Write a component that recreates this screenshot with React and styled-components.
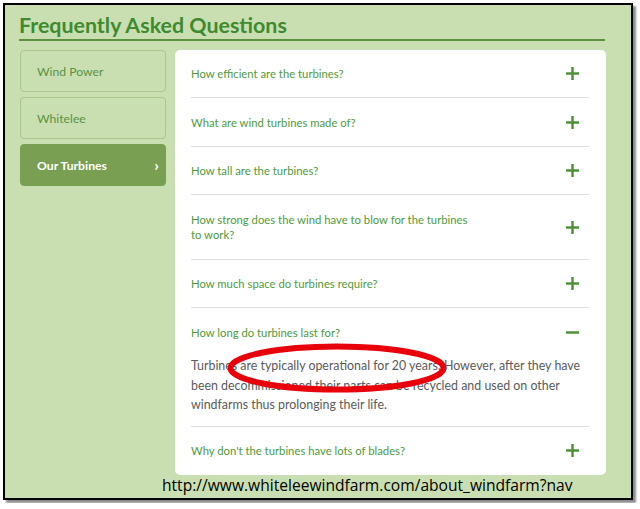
import React, { useState } from "react";
import styled, { createGlobalStyle } from "styled-components";

const GlobalStyle = createGlobalStyle`
  html, body {
    margin: 0;
    padding: 0;
    background: #ffffff;
  }
  body {
    font-family: "Lato", "Open Sans", sans-serif;
  }
`;

const Frame = styled.div`
  box-sizing: border-box;
  width: 630px;
  height: 497px;
  margin: 3px;
  border: 2px solid #000;
  background: #c9dfb2;
  box-shadow: 3px 3px 2px rgba(0, 0, 0, 0.45);
  padding: 7px 26px 0 14px;
  display: flex;
  flex-direction: column;
  position: relative;
`;

const Heading = styled.h1`
  margin: 0;
  font-family: "Lato", sans-serif;
  font-weight: 700;
  font-size: 21.4px;
  line-height: 26px;
  color: #3e8b2f;
  padding-bottom: 1px;
  border-bottom: 2px solid #5c9140;
`;

const Body = styled.div`
  display: grid;
  grid-template-columns: 146px 431px;
  column-gap: 9px;
  margin-top: 9px;
  padding-left: 1px;
`;

const Nav = styled.nav`
  display: flex;
  flex-direction: column;
  gap: 5px;
`;

const NavItem = styled.div`
  box-sizing: border-box;
  height: 42px;
  border-radius: 4px;
  border: 1px solid ${(p) => (p.$active ? "#789f52" : "#a7c78c")};
  background: ${(p) => (p.$active ? "#789f52" : "#c9dfb2")};
  color: ${(p) => (p.$active ? "#ffffff" : "#5a9344")};
  font-size: 12.2px;
  font-weight: ${(p) => (p.$active ? 700 : 400)};
  display: flex;
  align-items: center;
  justify-content: space-between;
  padding: 0 6px 0 16px;
`;

const Chevron = styled.span`
  font-size: 16px;
  font-weight: 700;
  line-height: 1;
`;

const Panel = styled.div`
  background: #ffffff;
  border-radius: 5px;
  padding: 0 17px 0 16px;
  height: 425px;
`;

const Item = styled.div`
  border-bottom: ${(p) => (p.$last ? "none" : "1px solid #dedede")};
`;

const Question = styled.div`
  box-sizing: border-box;
  min-height: ${(p) => p.$h || 47}px;
  display: flex;
  align-items: center;
  justify-content: space-between;
  color: #4f9a3c;
  font-size: 11.3px;
  line-height: 15px;
`;

const QText = styled.span`
  max-width: 285px;
`;

const Answer = styled.p`
  margin: 0;
  padding-bottom: 11px;
  color: #5a5a5a;
  font-size: 12.4px;
  line-height: 19.5px;
`;

const Toggle = styled.svg`
  flex: none;
  margin-right: 10px;
`;

const Url = styled.div`
  font-family: "Open Sans", sans-serif;
  font-size: 15.6px;
  color: #000;
  padding-left: 143px;
  line-height: 20px;
`;

const Ring = styled.svg`
  position: absolute;
  left: 217px;
  top: 335px;
  pointer-events: none;
`;

const Icon = ({ open }) => (
  <Toggle width="13" height="13" viewBox="0 0 13 13">
    <rect x="0" y="5.3" width="13" height="2.4" fill="#4a8f34" />
    {!open && <rect x="5.3" y="0" width="2.4" height="13" fill="#4a8f34" />}
  </Toggle>
);

const faqs = [
  { q: "How efficient are the turbines?" },
  { q: "What are wind turbines made of?", h: 48 },
  { q: "How tall are the turbines?" },
  { q: "How strong does the wind have to blow for the turbines to work?", h: 64 },
  { q: "How much space do turbines require?" },
  {
    q: "How long do turbines last for?",
    h: 48,
    a: "Turbines are typically operational for 20 years. However, after they have been decommissioned their parts can be recycled and used on other windfarms thus prolonging their life.",
  },
  { q: "Why don't the turbines have lots of blades?" },
];

export default function App() {
  const [open] = useState(5);
  return (
    <>
      <GlobalStyle />
      <Frame>
        <Heading>Frequently Asked Questions</Heading>
        <Body>
          <Nav>
            <NavItem>Wind Power</NavItem>
            <NavItem>Whitelee</NavItem>
            <NavItem $active>
              Our Turbines <Chevron>›</Chevron>
            </NavItem>
          </Nav>
          <Panel>
            {faqs.map((f, i) => (
              <Item key={f.q} $last={i === faqs.length - 1}>
                <Question $h={f.h}>
                  <QText>{f.q}</QText>
                  <Icon open={open === i} />
                </Question>
                {open === i && <Answer>{f.a}</Answer>}
              </Item>
            ))}
          </Panel>
        </Body>
        <Url>http://www.whiteleewindfarm.com/about_windfarm?nav</Url>
        <Ring width="230" height="56" viewBox="0 0 230 56">
          <ellipse cx="115" cy="28" rx="106.5" ry="21.5" fill="none" stroke="#e8000b" strokeWidth="6" />
        </Ring>
      </Frame>
    </>
  );
}
